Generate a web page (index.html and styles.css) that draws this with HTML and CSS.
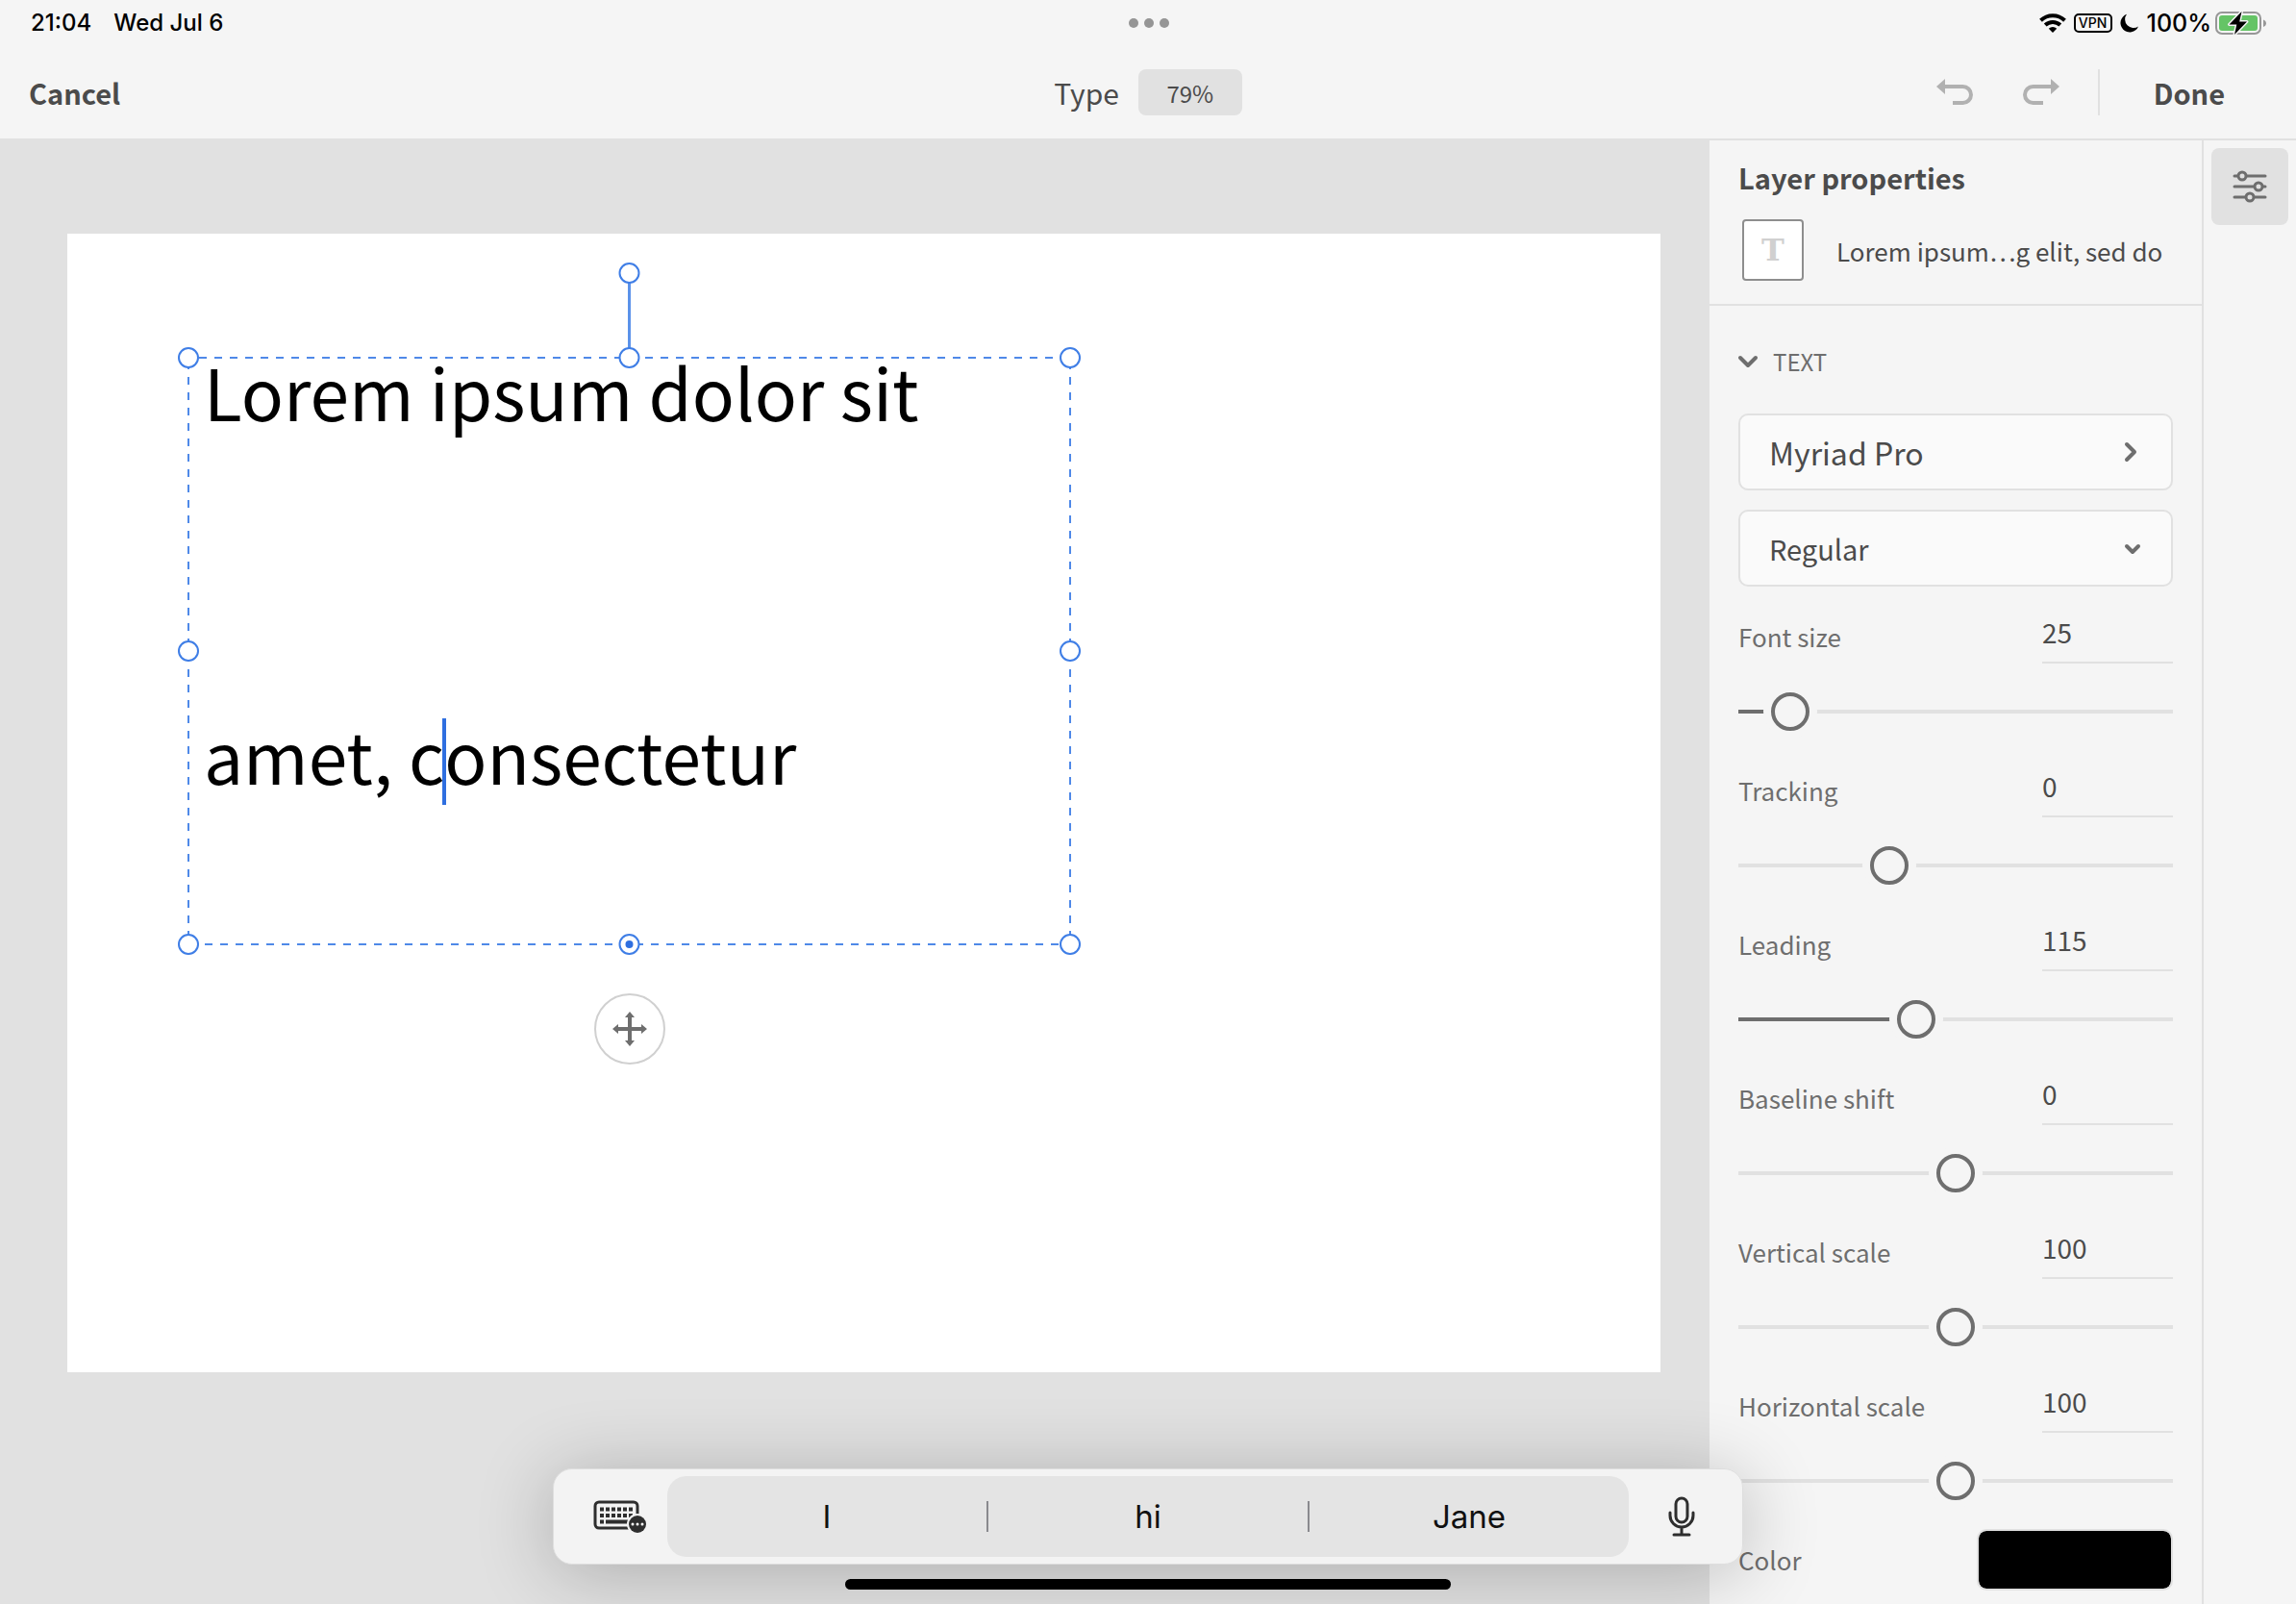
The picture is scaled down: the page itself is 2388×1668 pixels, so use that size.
FILE: index.html
```html
<!DOCTYPE html>
<html lang="en">
<head>
<meta charset="utf-8">
<title>Type</title>
<meta name="viewport" content="width=device-width, initial-scale=1">
<link rel="stylesheet" href="styles.css">
</head>
<body>
<div class="app">
  <div class="status-bar">
    <div class="status-group status-left"><span>21:04</span><span>Wed Jul 6</span></div>
    <div class="multitask"><i></i><i></i><i></i></div>
    <div class="status-group status-right">
      <svg width="28" height="20" viewBox="0 0 28 20" aria-label="Wi-Fi">
        <g fill="none" stroke="#000" stroke-width="4">
          <path d="M1.5 7.2a18 18 0 0 1 25 0"/>
          <path d="M6.2 12a11.5 11.5 0 0 1 15.6 0"/>
        </g>
        <path d="M14 20l-4.2-4.3a6.200 6.200 0 0 1 8.400 0z"/>
      </svg>
      <span class="vpn">VPN</span>
      <svg width="20" height="20" viewBox="0 0 20 20" aria-label="Focus"><path d="M7 .8a9.600 9.600 0 1 0 12 12.600A8.800 8.800 0 0 1 7 .8z"/></svg>
      <span class="percent">100%</span>
      <svg width="54" height="26" viewBox="0 0 54 26" aria-label="Battery charging">
        <rect x="1" y="2" width="46" height="22" rx="6" fill="none" stroke="#979797" stroke-width="2"/>
        <rect x="4" y="5" width="40" height="16" rx="3" fill="#65c466"/>
        <path d="M50 9.500c4 1.500 4 6 0 7.500z" fill="#979797"/>
        <path d="M27.500 1L14.500 14.500h7.800L20 25l13-13.500h-7.800z" fill="#000" stroke="#f5f5f5" stroke-width="3" stroke-linejoin="round" paint-order="stroke"/>
      </svg>
    </div>
  </div>

  <header class="toolbar">
    <div class="toolbar-side"><button class="text-button">Cancel</button></div>
    <div class="toolbar-title"><h1>Type</h1><button class="zoom-level">79%</button></div>
    <div class="toolbar-side toolbar-end">
      <div class="history">
        <button aria-label="Undo">
          <svg width="38" height="28" viewBox="0 0 38 28"><path d="M17 25h10.500a8.500 8.500 0 0 0 0-17H7" fill="none" stroke="#b1b1b1" stroke-width="4"/><path d="M9 0v16L0 8z" fill="#b1b1b1"/></svg>
        </button>
        <button aria-label="Redo">
          <svg width="38" height="28" viewBox="0 0 38 28"><path d="M21 25H10.500a8.500 8.500 0 0 1 0-17H31" fill="none" stroke="#b1b1b1" stroke-width="4"/><path d="M29 0v16l9-8z" fill="#b1b1b1"/></svg>
        </button>
      </div>
      <button class="text-button">Done</button>
    </div>
  </header>

  <main class="workspace">
    <section class="canvas" aria-label="Canvas">
      <div class="artboard">
        <div class="text-frame">
          <svg class="frame-lines" width="100%" height="100%" aria-hidden="true">
            <g stroke="#4f89e8" stroke-width="2" stroke-dasharray="8 8">
              <line x1="0" y1="0" x2="100%" y2="0" stroke-dashoffset="5"/>
              <line x1="0" y1="100%" x2="100%" y2="100%" stroke-dashoffset="-1"/>
              <line x1="0" y1="0" x2="0" y2="100%" stroke-dashoffset="-4"/>
              <line x1="100%" y1="0" x2="100%" y2="100%" stroke-dashoffset="-4"/>
            </g>
            <line x1="50%" y1="-88" x2="50%" y2="0" stroke="#5b92ea" stroke-width="3"/>
            <g fill="#fff" stroke="#3f7ee6" stroke-width="2">
              <circle cx="50%" cy="-88" r="10"/>
              <circle cx="0" cy="0" r="10"/><circle cx="50%" cy="0" r="10"/><circle cx="100%" cy="0" r="10"/>
              <circle cx="0" cy="50%" r="10"/><circle cx="100%" cy="50%" r="10"/>
              <circle cx="0" cy="100%" r="10"/><circle cx="50%" cy="100%" r="10"/><circle cx="100%" cy="100%" r="10"/>
            </g>
            <circle cx="50%" cy="100%" r="4" fill="#2f6fe0"/>
          </svg>
          <div class="frame-text" role="textbox" aria-multiline="true" aria-label="Text layer" contenteditable="true" spellcheck="false"><p>Lorem ipsum dolor sit</p><p>amet, c<span class="caret"></span>onsectetur</p></div>
          <button class="move-handle" aria-label="Move">
            <svg width="36" height="36" viewBox="0 0 36 36"><path d="M18 3v30M3 18h30" stroke="#6e6e6e" stroke-width="4"/><path d="M18 0l5 6H13zM18 36l5-6H13zM0 18l6-5v10zM36 18l-6-5v10z" fill="#6e6e6e"/></svg>
          </button>
        </div>
      </div>
    </section>

    <aside class="panel">
      <div class="panel-head">
        <h2>Layer properties</h2>
        <div class="layer">
          <span class="layer-thumb">T</span>
          <span class="layer-name">Lorem ipsum…g elit, sed do</span>
        </div>
      </div>
      <div class="panel-body">
        <button class="section-toggle" aria-expanded="true">
          <svg width="20" height="12" viewBox="0 0 20 12"><path d="M2 2l8 8 8-8" fill="none" stroke="#6e6e6e" stroke-width="4" stroke-linecap="round" stroke-linejoin="round"/></svg>
          TEXT
        </button>
        <button class="field">Myriad Pro
          <svg width="12" height="20" viewBox="0 0 12 20"><path d="M2 2l8 8-8 8" fill="none" stroke="#6e6e6e" stroke-width="4" stroke-linecap="round" stroke-linejoin="round"/></svg>
        </button>
        <div class="select-wrap">
          <select class="field" aria-label="Font style"><option>Regular</option><option>Bold</option></select>
          <svg class="select-arrow" width="16" height="10" viewBox="0 0 16 10"><path d="M2 2l6 6 6-6" fill="none" stroke="#6e6e6e" stroke-width="4" stroke-linecap="round" stroke-linejoin="round"/></svg>
        </div>

        <div class="properties">
          <div class="property">
            <label for="size">Font size</label><input class="value" id="size" type="text" value="25">
            <input class="slider" type="range" aria-label="Font size" min="0" max="300" value="25" style="--fill: 8%">
          </div>
          <div class="property">
            <label for="tracking">Tracking</label><input class="value" id="tracking" type="text" value="0">
            <input class="slider" type="range" aria-label="Tracking" min="-200" max="400" value="0">
          </div>
          <div class="property">
            <label for="leading">Leading</label><input class="value" id="leading" type="text" value="115">
            <input class="slider" type="range" aria-label="Leading" min="0" max="288" value="115" style="--fill: 40%">
          </div>
          <div class="property">
            <label for="shift">Baseline shift</label><input class="value" id="shift" type="text" value="0">
            <input class="slider" type="range" aria-label="Baseline shift" min="-100" max="100" value="0">
          </div>
          <div class="property">
            <label for="vscale">Vertical scale</label><input class="value" id="vscale" type="text" value="100">
            <input class="slider" type="range" aria-label="Vertical scale" min="0" max="200" value="100">
          </div>
          <div class="property">
            <label for="hscale">Horizontal scale</label><input class="value" id="hscale" type="text" value="100">
            <input class="slider" type="range" aria-label="Horizontal scale" min="0" max="200" value="100">
          </div>
        </div>
        <div class="color-row">
          <label for="color">Color</label>
          <input id="color" class="swatch" type="color" value="#000000">
        </div>
      </div>
    </aside>

    <nav class="rail">
      <button class="rail-button" aria-label="Properties">
        <svg width="34" height="34" viewBox="0 0 34 34" fill="#e1e1e1" stroke="#6e6e6e" stroke-width="3" stroke-linecap="round">
          <path d="M1 6h32M1 17h32M1 28h32"/>
          <circle cx="9" cy="6" r="4"/><circle cx="26" cy="17" r="4"/><circle cx="17" cy="28" r="4"/>
        </svg>
      </button>
    </nav>
  </main>
</div>

<div class="shortcut-bar">
  <button class="shortcut-icon keyboard-icon" aria-label="Keyboard">
    <svg width="58" height="36" viewBox="0 0 58 36">
      <rect x="2" y="3" width="44" height="27" rx="4" fill="none" stroke="#2e2e2e" stroke-width="3"/>
      <path d="M7 10.500h36M7 17h36" stroke="#2e2e2e" stroke-width="4" stroke-dasharray="4 2"/>
      <path d="M7 23.500h4M13 23.500h24" stroke="#2e2e2e" stroke-width="4"/>
      <circle cx="46" cy="26" r="11" fill="#f3f3f3"/>
      <circle cx="46" cy="26" r="9" fill="#2e2e2e"/>
      <g fill="#fff"><circle cx="41" cy="26" r="1.500"/><circle cx="46" cy="26" r="1.500"/><circle cx="51" cy="26" r="1.500"/></g>
    </svg>
  </button>
  <div class="suggestions">
    <button>I</button><button>hi</button><button>Jane</button>
  </div>
  <button class="shortcut-icon mic-icon" aria-label="Dictate">
    <svg width="28" height="42" viewBox="0 0 28 42" fill="none" stroke="#2e2e2e" stroke-width="3" stroke-linecap="round">
      <rect x="8" y="2" width="12" height="25" rx="6"/>
      <path d="M2 17v3a12 12 0 0 0 24 0v-3M14 33v7M6 40h16"/>
    </svg>
  </button>
</div>
<div class="home-indicator"></div>
</body>
</html>
```
FILE: styles.css
```css
* { box-sizing: border-box; }

:root {
  --ui: "Noto Sans CJK SC", "Noto Sans", sans-serif;
  --system: Inter, "Liberation Sans", sans-serif;
  --surface: #f5f5f5;
  --line: #e1e1e1;
  --text: #4b4b4b;
  --muted: #6e6e6e;
}

body {
  margin: 0;
  font-family: var(--ui);
  color: var(--text);
  background: var(--surface);
}

h1, h2, p { margin: 0; font-weight: 400; }

button, input, select {
  margin: 0;
  padding: 0;
  border: 0;
  background: none;
  font: inherit;
  color: inherit;
}

svg { display: block; flex: none; overflow: visible; }

.app {
  display: flex;
  flex-direction: column;
  height: 100vh;
  overflow: hidden;
}

/* Status bar */
.status-bar {
  display: flex;
  align-items: center;
  height: 48px;
  padding: 0 30px 0 32px;
  font: 500 24px/32px var(--system);
  color: #000;
}
.status-group { flex: 1; display: flex; align-items: center; }
.status-left { gap: 23px; }
.status-right { justify-content: flex-end; gap: 8px; }
.percent { font-size: 25px; margin-right: -4px; }
.multitask { display: flex; gap: 6px; }
.multitask i { width: 10px; height: 10px; border-radius: 50%; background: #959595; }
.vpn {
  width: 40px;
  height: 20px;
  border: 2px solid #000;
  border-radius: 5px;
  font-size: 14px;
  line-height: 16px;
  text-align: center;
}

/* Toolbar */
.toolbar {
  display: grid;
  grid-template-columns: 1fr auto 1fr;
  align-items: center;
  height: 98px;
  padding: 0 30px;
  border-bottom: 2px solid var(--line);
}
.toolbar-side { display: flex; align-items: center; }
.toolbar-end { justify-content: flex-end; padding-right: 44px; gap: 56px; }
.toolbar-title { display: flex; align-items: center; gap: 20px; }
.toolbar h1 { font-size: 30px; line-height: 48px; }
.text-button { font-size: 29px; line-height: 48px; font-weight: 700; }
.zoom-level {
  width: 108px;
  height: 48px;
  border-radius: 8px;
  background: var(--line);
  font-size: 24px;
}
.history {
  display: flex;
  align-items: center;
  gap: 52px;
  height: 48px;
  padding-right: 40px;
  border-right: 2px solid var(--line);
}

/* Workspace */
.workspace { flex: 1; min-height: 0; display: flex; }
.canvas { flex: 1; min-width: 0; padding: 97px 51px 0 70px; background: #e1e1e1; }
.artboard { position: relative; aspect-ratio: 1657 / 1184; background: #fff; }
.text-frame { position: absolute; left: 126px; top: 129px; width: 917px; height: 610px; }
.frame-lines { position: absolute; left: 0; top: 0; }
.frame-text {
  position: absolute;
  left: 16px;
  top: -155px;
  white-space: nowrap;
  font-size: 73px;
  line-height: 378px;
  color: #000;
  outline: 0;
}
.caret {
  display: inline-block;
  width: 4px;
  height: 90px;
  margin: 0 -2px;
  vertical-align: -21px;
  background: #2f6fe0;
}
.move-handle {
  position: absolute;
  left: 50%;
  top: 100%;
  display: grid;
  place-items: center;
  width: 74px;
  height: 74px;
  margin: 51px 0 0 -37px;
  border: 2px solid #d0d0d0;
  border-radius: 50%;
  background: #fff;
}

/* Properties panel */
.panel { width: 512px; flex: none; overflow: hidden; }
.panel-head { padding: 14px 40px 24px 30px; border-bottom: 2px solid var(--line); }
.panel-head h2 { font-size: 29px; line-height: 48px; font-weight: 700; }
.layer { display: flex; align-items: center; gap: 34px; margin: 20px 0 0 4px; }
.layer-thumb {
  flex: none;
  width: 64px;
  height: 64px;
  border: 2px solid #8e8e8e;
  border-radius: 4px;
  background: #fff;
  color: #d0d0d0;
  font: 700 32px/60px "DejaVu Serif", serif;
  text-align: center;
}
.layer-name { font-size: 26px; line-height: 40px; padding-top: 2px; white-space: nowrap; }
.panel-body { display: flex; flex-direction: column; padding: 38px 30px 0; }
.section-toggle {
  display: flex;
  align-items: center;
  gap: 16px;
  margin-bottom: 34px;
  font-size: 24px;
  line-height: 40px;
  color: var(--muted);
}
.field {
  display: flex;
  align-items: center;
  justify-content: space-between;
  width: 100%;
  height: 80px;
  padding: 0 36px 0 30px;
  border: 2px solid var(--line);
  border-radius: 10px;
  background: #fafafa;
  font-size: 32px;
  appearance: none;
}
.select-wrap { position: relative; margin: 20px 0 24px; }
.select-wrap .field { font-size: 29px; }
.select-arrow { position: absolute; right: 34px; top: 36px; pointer-events: none; }

.properties { display: flex; flex-direction: column; gap: 4px; }
.property {
  display: grid;
  grid-template-columns: 1fr 136px;
  grid-template-rows: 56px 100px;
}
.property label, .color-row label { font-size: 26px; line-height: 56px; color: var(--muted); }
.value {
  width: 136px;
  height: 56px;
  padding-bottom: 8px;
  border-bottom: 2px solid var(--line);
  font-size: 28px;
}
.slider {
  --fill: 0%;
  grid-column: 1 / -1;
  align-self: center;
  width: 100%;
  height: 40px;
  appearance: none;
}
.slider::-webkit-slider-runnable-track {
  height: 4px;
  background: linear-gradient(to right, var(--muted) var(--fill), var(--line) var(--fill));
}
.slider::-webkit-slider-thumb {
  appearance: none;
  width: 40px;
  height: 40px;
  margin-top: -18px;
  border: 4px solid var(--muted);
  border-radius: 50%;
  background: var(--surface);
  box-shadow: 0 0 0 8px var(--surface);
}
.color-row { display: flex; align-items: center; justify-content: space-between; }
.swatch {
  width: 204px;
  height: 64px;
  border: 2px solid var(--line);
  border-radius: 10px;
  overflow: hidden;
  appearance: none;
}
.swatch::-webkit-color-swatch-wrapper { padding: 0; }
.swatch::-webkit-color-swatch { border: 0; border-radius: 8px; }

.rail { width: 98px; flex: none; padding: 8px; border-left: 2px solid var(--line); }
.rail-button {
  display: grid;
  place-items: center;
  width: 80px;
  height: 80px;
  border-radius: 8px;
  background: var(--line);
}

/* Floating keyboard bar */
.shortcut-bar {
  position: fixed;
  left: 50%;
  bottom: 41px;
  display: flex;
  width: 1238px;
  height: 100px;
  margin-left: -619px;
  padding: 7px 0;
  border: 1px solid #dedede;
  border-radius: 20px;
  background: #f3f3f3;
  box-shadow: 0 8px 80px rgba(0, 0, 0, .24);
}
.shortcut-icon { width: 118px; flex: none; display: grid; place-items: center; }
.keyboard-icon { padding-left: 22px; }
.mic-icon { padding-right: 8px; }
.suggestions {
  display: flex;
  align-items: center;
  flex: 1;
  border-radius: 20px;
  background: #e4e4e4;
  font: 400 33px/32px var(--system);
  color: #111;
}
.suggestions button { flex: 1; }
.suggestions button + button { border-left: 2px solid #8a8a8e; }

.home-indicator {
  position: fixed;
  left: 50%;
  bottom: 15px;
  width: 630px;
  height: 11px;
  margin-left: -315px;
  border-radius: 6px;
  background: #000;
}
```
